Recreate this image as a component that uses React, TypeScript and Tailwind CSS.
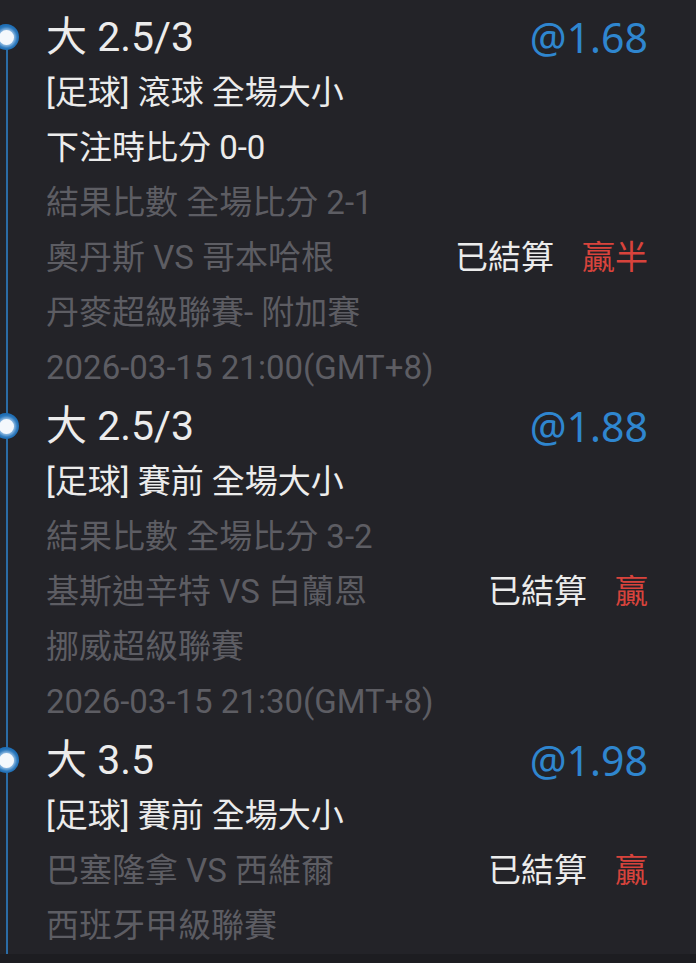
import React from 'react';

interface Bet {
  title: string;
  odds: string;
  market: string;
  scoreAtBet?: string;
  result: string;
  teams: string;
  outcome: string;
  league: string;
  time?: string;
}

const bets: Bet[] = [
  {
    title: '大 2.5/3',
    odds: '@1.68',
    market: '[足球] 滾球 全場大小',
    scoreAtBet: '下注時比分 0-0',
    result: '結果比數 全場比分 2-1',
    teams: '奧丹斯 VS 哥本哈根',
    outcome: '贏半',
    league: '丹麥超級聯賽- 附加賽',
    time: '2026-03-15 21:00(GMT+8)',
  },
  {
    title: '大 2.5/3',
    odds: '@1.88',
    market: '[足球] 賽前 全場大小',
    result: '結果比數 全場比分 3-2',
    teams: '基斯迪辛特 VS 白蘭恩',
    outcome: '贏',
    league: '挪威超級聯賽',
    time: '2026-03-15 21:30(GMT+8)',
  },
  {
    title: '大 3.5',
    odds: '@1.98',
    market: '[足球] 賽前 全場大小',
    result: '',
    teams: '巴塞隆拿 VS 西維爾',
    outcome: '贏',
    league: '西班牙甲級聯賽',
  },
];

const font = "font-['Roboto','Noto_Sans_CJK_TC',sans-serif]";

function Line({ children, muted }: { children: React.ReactNode; muted?: boolean }) {
  return (
    <div className={`h-[55px] flex items-center text-[33px] leading-none ${muted ? 'text-[#5d5d63]' : 'text-[#ececec]'}`}>
      {children}
    </div>
  );
}

function Entry({ bet }: { bet: Bet }) {
  return (
    <div className="relative">
      {/* timeline dot */}
      <div className="absolute left-[-7px] top-[14px] w-[26px] h-[26px] rounded-full bg-[#1f6fb6] flex items-center justify-center">
        <div className="w-[15px] h-[15px] rounded-full bg-[#f4f8fc] shadow-[0_0_3px_2px_rgba(200,225,250,0.7)]" />
      </div>

      <div className="pl-[46px] pr-[42px]">
        <div className="h-[55px] flex items-center justify-between leading-none">
          <span className="text-[41px] text-[#ececec]">{bet.title}</span>
          <span className="text-[41px] text-[#2f86cf] font-['Noto_Sans',sans-serif]">{bet.odds}</span>
        </div>
        <Line>{bet.market}</Line>
        {bet.scoreAtBet && <Line>{bet.scoreAtBet}</Line>}
        {bet.result && <Line muted>{bet.result}</Line>}
        <div className="h-[55px] flex items-center justify-between text-[33px] leading-none">
          <span className="text-[#5d5d63]">{bet.teams}</span>
          <span className="flex items-center gap-[28px]">
            <span className="text-[#ececec]">已結算</span>
            <span className="text-[#d8433c]">{bet.outcome}</span>
          </span>
        </div>
        <Line muted>{bet.league}</Line>
        {bet.time && <Line muted>{bet.time}</Line>}
      </div>
    </div>
  );
}

export default function App() {
  return (
    <div className={`w-[696px] h-[963px] bg-[#1d1d21] overflow-hidden ${font}`}>
      <div className="flex h-[954px]">
        <div className="relative flex-1 bg-[#232328] overflow-hidden">
          {/* timeline line */}
          <div className="absolute left-[6px] top-[30px] bottom-0 w-[2px] bg-[#2b6ca6]" />
          <div className="flex flex-col gap-[4px] pt-[10px]">
            {bets.map((bet, i) => (
              <Entry key={i} bet={bet} />
            ))}
          </div>
        </div>
        <div className="w-[6px] bg-[#27272c]" />
      </div>
    </div>
  );
}
